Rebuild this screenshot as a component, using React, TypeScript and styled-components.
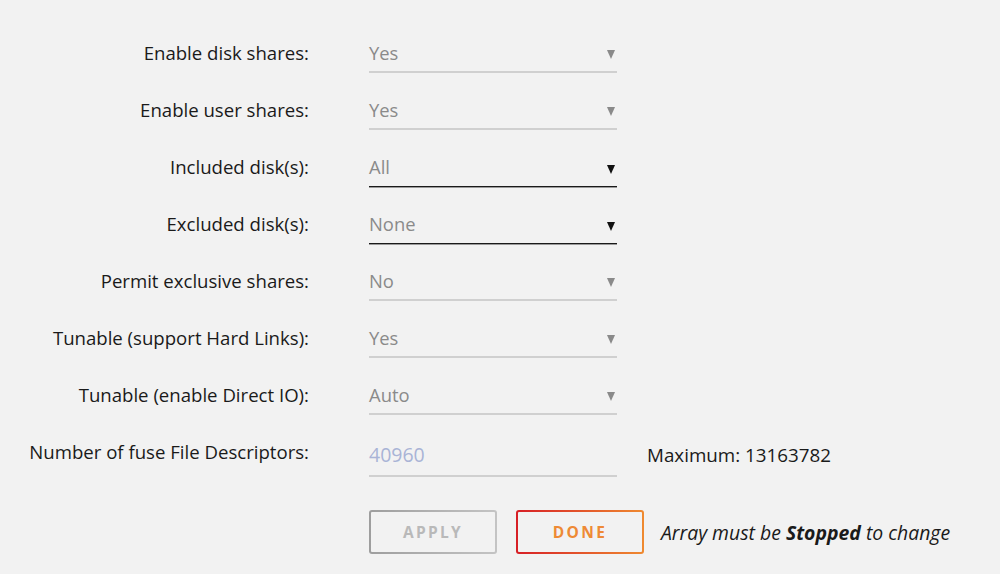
import React from "react";
import styled, { createGlobalStyle } from "styled-components";

const Global = createGlobalStyle`
  html, body { margin: 0; padding: 0; background: #f2f2f2; }
  body { font-family: "Open Sans", "Noto Sans", sans-serif; color: #1c1c1c; }
`;

const Page = styled.div`
  padding-top: 42px;
  width: 1000px;
  height: 574px;
  box-sizing: border-box;
  overflow: hidden;
`;

const Form = styled.div`
  display: grid;
  grid-template-columns: 309px 248px auto;
  grid-auto-rows: 57px;
  column-gap: 60px;
`;

const Label = styled.div`
  text-align: right;
  font-size: 18.6px;
  line-height: 22px;
  color: #1a1a1a;
  white-space: nowrap;
`;

const Select = styled.div<{ $enabled?: boolean }>`
  position: relative;
  height: 22px;
  padding-bottom: ${(p) => (p.$enabled ? "8px" : "7px")};
  font-size: 18.4px;
  line-height: 22px;
  color: #8a8a8a;
  border-bottom: ${(p) => (p.$enabled ? "1px solid #1a1a1a" : "2px solid #d0d0d0")};
  box-shadow: ${(p) => (p.$enabled ? "0 1px 0 #9a9a9a" : "none")};
`;

const Arrow = styled.span<{ $enabled?: boolean }>`
  position: absolute;
  right: 2px;
  top: ${(p) => (p.$enabled ? "9px" : "8px")};
  width: 0;
  height: 0;
  border-left: 4px solid transparent;
  border-right: 4px solid transparent;
  border-top: 9px solid ${(p) => (p.$enabled ? "#111" : "#8a8a8a")};
`;

const NumberInput = styled.div`
  margin-top: 3px;
  height: 22px;
  padding-bottom: 9px;
  font-size: 19.5px;
  line-height: 22px;
  color: #a9b4d6;
  border-bottom: 2px solid #d0d0d0;
`;

const Note = styled.div`
  margin-left: -30px;
  margin-top: 3px;
  font-size: 18.8px;
  line-height: 22px;
  color: #1a1a1a;
`;

const ButtonRow = styled.div`
  grid-column: 2 / 4;
  display: flex;
  align-items: center;
  gap: 19px;
  padding-top: 12px;
  align-self: start;
`;

const Button = styled.button<{ $variant: "apply" | "done" }>`
  width: 128px;
  height: 44px;
  border: 2px solid transparent;
  border-radius: 3px;
  background:
    linear-gradient(#f2f2f2, #f2f2f2) padding-box,
    ${(p) =>
      p.$variant === "done"
        ? "linear-gradient(90deg, #d71f26, #ef8a30) border-box"
        : "linear-gradient(90deg, #9e9e9e, #c4c4c4) border-box"};
  color: ${(p) => (p.$variant === "done" ? "#ee8a35" : "#b9b9b9")};
  font-family: "Open Sans", "Noto Sans", sans-serif;
  font-weight: 700;
  font-size: 15.5px;
  letter-spacing: 2.3px;
  padding: 0;
  text-align: center;
`;

const Hint = styled.span`
  margin-left: -2px;
  font-style: italic;
  font-size: 19.4px;
  color: #1a1a1a;
  b { font-weight: 700; }
`;

const rows: { label: string; value: string; enabled?: boolean }[] = [
  { label: "Enable disk shares:", value: "Yes" },
  { label: "Enable user shares:", value: "Yes" },
  { label: "Included disk(s):", value: "All", enabled: true },
  { label: "Excluded disk(s):", value: "None", enabled: true },
  { label: "Permit exclusive shares:", value: "No" },
  { label: "Tunable (support Hard Links):", value: "Yes" },
  { label: "Tunable (enable Direct IO):", value: "Auto" },
];

export default function App() {
  return (
    <Page>
      <Global />
      <Form>
        {rows.map((r) => (
          <React.Fragment key={r.label}>
            <Label>{r.label}</Label>
            <Select $enabled={r.enabled}>
              {r.value}
              <Arrow $enabled={r.enabled} />
            </Select>
            <div />
          </React.Fragment>
        ))}
        <Label>Number of fuse File Descriptors:</Label>
        <NumberInput>40960</NumberInput>
        <Note>Maximum: 13163782</Note>
        <div />
        <ButtonRow>
          <Button $variant="apply">APPLY</Button>
          <Button $variant="done">DONE</Button>
          <Hint>
            Array must be <b>Stopped</b> to change
          </Hint>
        </ButtonRow>
      </Form>
    </Page>
  );
}
